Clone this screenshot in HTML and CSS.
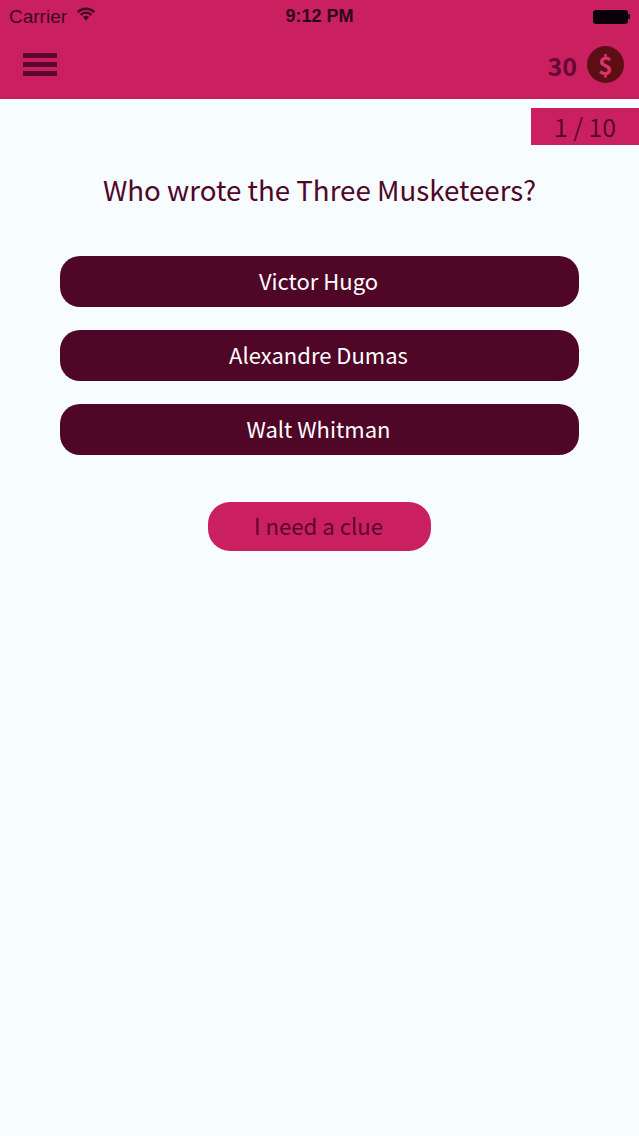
FILE: index.html
```html
<!DOCTYPE html>
<html lang="en">

<head>
    <meta charset="UTF-8">
    <meta name="viewport" content="width=device-width, initial-scale=1.0">
    <title>Quiz</title>
    <link rel="stylesheet" href="styles.css">
</head>

<body>
    <header class="top-bar">
        <div class="status-bar">
            <div class="status-left">
                <span>Carrier</span>
                <svg class="wifi" width="20" height="15" viewBox="0 0 20 14">
                    <path d="M10 13 L6.9 9.6 A4.6 4.6 0 0 1 13.1 9.6 Z" fill="#3d0824" />
                    <path d="M4.6 7.3 A7.8 7.8 0 0 1 15.4 7.3" fill="none" stroke="#3d0824" stroke-width="2.4" />
                    <path d="M1.8 4.6 A11.8 11.8 0 0 1 18.2 4.6" fill="none" stroke="#3d0824" stroke-width="2.4" />
                </svg>
            </div>
            <div class="status-time">9:12 PM</div>
            <div class="status-right">
                <div class="battery"></div>
                <div class="battery-tip"></div>
            </div>
        </div>
        <div class="nav-bar">
            <div class="menu-icon">
                <span></span>
                <span></span>
                <span></span>
            </div>
            <div class="coins">
                <span class="coin-count">30</span>
                <span class="coin">$</span>
            </div>
        </div>
    </header>

    <div class="progress-row">
        <div class="progress">1 / 10</div>
    </div>

    <h1 class="question">Who wrote the Three Musketeers?</h1>

    <div class="answers">
        <button class="answer">Victor Hugo</button>
        <button class="answer">Alexandre Dumas</button>
        <button class="answer">Walt Whitman</button>
    </div>

    <div class="clue-row">
        <button class="clue">I need a clue</button>
    </div>
</body>

</html>
```

FILE: styles.css
```css
body {
    margin: 0;
    height: 1136px;
    overflow: hidden;
    background-color: #f6fcff;
    font-family: "Noto Sans CJK SC", "Noto Sans", sans-serif;
    color: #4f0627;
}

button {
    display: block;
    border: none;
    padding: 0 2px 3px 0;
    font-family: inherit;
    cursor: pointer;
}

/* Top bar */
.top-bar {
    height: 99px;
    background-color: #cb2060;
}

.status-bar {
    height: 33px;
    display: flex;
    align-items: center;
    justify-content: space-between;
    padding: 0 9px;
    font-family: "Liberation Sans", sans-serif;
    font-size: 19px;
    color: #3d0824;
}

.status-left {
    flex: 1;
    display: flex;
    align-items: center;
    gap: 9px;
}

.wifi {
    margin-top: -4px;
}

.status-time {
    font-size: 18px;
    font-weight: bold;
    color: #2c0619;
}

.status-right {
    flex: 1;
    display: flex;
    align-items: center;
    justify-content: flex-end;
}

.battery {
    width: 35px;
    height: 14px;
    border-radius: 3px;
    background-color: #0a0208;
}

.battery-tip {
    width: 2px;
    height: 5px;
    background-color: #2c0619;
}

.nav-bar {
    height: 66px;
    display: flex;
    align-items: center;
    justify-content: space-between;
    padding: 0 15px 0 23px;
}

.menu-icon {
    width: 34px;
    display: flex;
    flex-direction: column;
    gap: 4px;
    margin-top: -4px;
}

.menu-icon span {
    height: 5px;
    background-color: #5c0530;
}

.coins {
    display: flex;
    align-items: center;
    gap: 10px;
    margin-top: -3px;
}

.coin-count {
    font-size: 25px;
    font-weight: bold;
    color: #640836;
}

.coin {
    width: 37px;
    height: 37px;
    border-radius: 50%;
    background-color: #5c0e14;
    color: #d8336c;
    font-size: 25px;
    font-weight: bold;
    line-height: 37px;
    text-align: center;
}

/* Progress */
.progress-row {
    display: flex;
    justify-content: flex-end;
    padding-top: 9px;
}

.progress {
    width: 108px;
    height: 37px;
    background-color: #cb2060;
    font-size: 25px;
    font-weight: 350;
    line-height: 36px;
    text-align: center;
}

/* Question */
.question {
    margin: 23px 0 0;
    font-size: 27.7px;
    font-weight: normal;
    line-height: 42px;
    text-align: center;
}

/* Answers */
.answers {
    display: flex;
    flex-direction: column;
    gap: 23px;
    margin: 46px 60px 0;
}

.answer {
    height: 51px;
    border-radius: 20px;
    background-color: #4f0627;
    color: #fff;
    font-size: 22px;
}

.clue-row {
    display: flex;
    justify-content: center;
    margin-top: 47px;
}

.clue {
    width: 223px;
    height: 49px;
    border-radius: 22px;
    background-color: #cb2060;
    color: #5c0530;
    font-size: 22.2px;
}
```
